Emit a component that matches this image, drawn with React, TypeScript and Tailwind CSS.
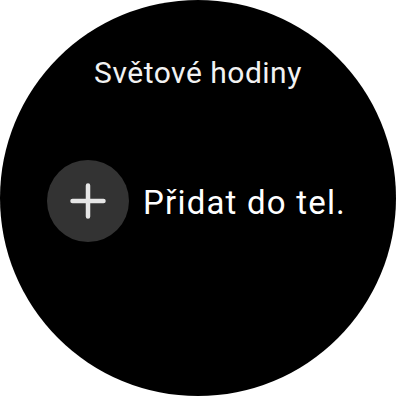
export default function App() {
  return (
    <div className="w-[396px] h-[396px] bg-white">
      <div
        className="w-[396px] h-[396px] rounded-full bg-black flex flex-col items-center text-white"
        style={{ fontFamily: "Roboto, 'Noto Sans', sans-serif" }}
      >
        <div className="mt-[55px] text-[30px] leading-[36px] tracking-[0.5px] text-[#f2f2f2]">Světové hodiny</div>
        <div className="mt-[69px] flex items-center self-start pl-[47px]">
          <button className="w-[82px] h-[82px] rounded-full bg-[#333333] flex items-center justify-center">
            <svg width="36" height="36" viewBox="0 0 36 36" fill="none">
              <path d="M18 2.5v31M2.5 18h31" stroke="#e6e6e6" strokeWidth="4.5" strokeLinecap="round" />
            </svg>
          </button>
          <span className="ml-[14px] mt-[4px] text-[33px] leading-[40px] tracking-[1.2px] text-white">Přidat do tel.</span>
        </div>
      </div>
    </div>
  );
}
